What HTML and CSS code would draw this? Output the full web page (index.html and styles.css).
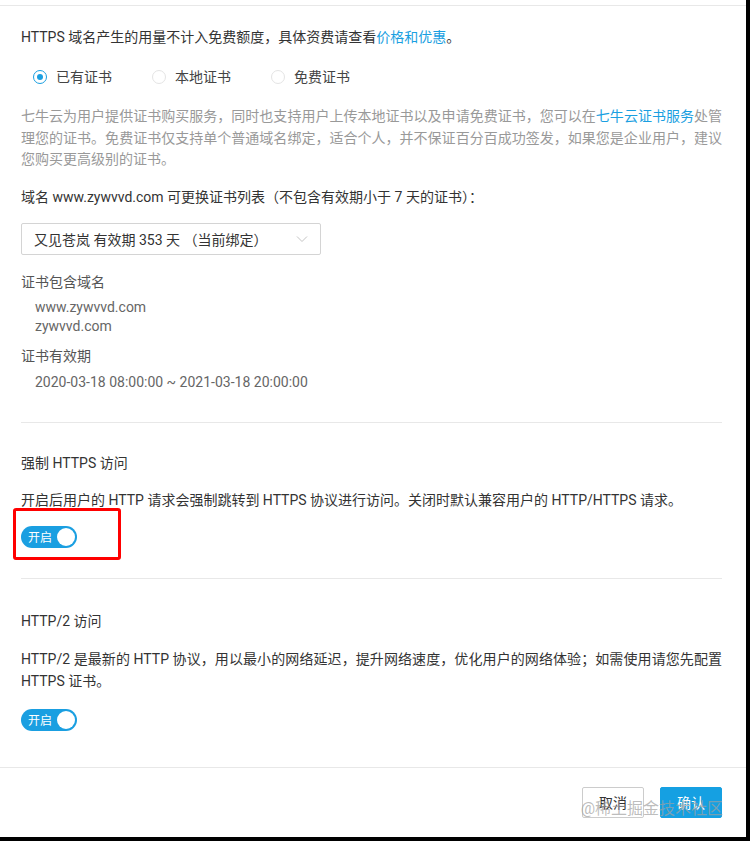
FILE: index.html
```html
<!DOCTYPE html>
<html lang="zh-CN">
<head>
    <meta charset="UTF-8">
    <meta name="viewport" content="width=device-width, initial-scale=1.0">
    <title>HTTPS 配置</title>
    <link rel="stylesheet" href="styles.css">
</head>
<body>
    <div class="modal">
        <div class="modal-top"></div>

        <div class="section section-cert">
            <p class="text">HTTPS 域名产生的用量不计入免费额度，具体资费请查看<a href="#" class="link">价格和优惠</a>。</p>

            <div class="radios">
                <label class="radio checked"><span class="dot"></span>已有证书</label>
                <label class="radio"><span class="dot"></span>本地证书</label>
                <label class="radio"><span class="dot"></span>免费证书</label>
            </div>

            <p class="hint">七牛云为用户提供证书购买服务，同时也支持用户上传本地证书以及申请免费证书，您可以在<a href="#" class="link">七牛云证书服务</a>处管理您的证书。免费证书仅支持单个普通域名绑定，适合个人，并不保证百分百成功签发，如果您是企业用户，建议您购买更高级别的证书。</p>

            <p class="text list-title">域名 www.zywvvd.com 可更换证书列表（不包含有效期小于 7 天的证书）：</p>

            <div class="select">
                <span>又见苍岚 有效期 353 天 （当前绑定）</span>
                <svg class="chevron" width="12" height="8" viewBox="0 0 12 8"><path d="M1 1.5 L6 6.5 L11 1.5" fill="none" stroke="#c4c4c4" stroke-width="1"/></svg>
            </div>

            <div class="field-label">证书包含域名</div>
            <div class="field-value">www.zywvvd.com<br>zywvvd.com</div>
            <div class="field-label second">证书有效期</div>
            <div class="field-value date">2020-03-18 08:00:00 ~ 2021-03-18 20:00:00</div>
        </div>

        <div class="section section-force">
            <h4 class="title">强制 HTTPS 访问</h4>
            <p class="text desc">开启后用户的 HTTP 请求会强制跳转到 HTTPS 协议进行访问。关闭时默认兼容用户的 HTTP/HTTPS 请求。</p>
            <div class="toggle-wrap">
                <div class="toggle"><span>开启</span><i class="knob"></i></div>
                <div class="mark"></div>
            </div>
        </div>

        <div class="section section-http2">
            <h4 class="title">HTTP/2 访问</h4>
            <p class="text desc">HTTP/2 是最新的 HTTP 协议，用以最小的网络延迟，提升网络速度，优化用户的网络体验；如需使用请您先配置 HTTPS 证书。</p>
            <div class="toggle-wrap">
                <div class="toggle"><span>开启</span><i class="knob"></i></div>
            </div>
        </div>

        <div class="footer">
            <button class="btn">取消</button>
            <button class="btn primary">确认</button>
            <span class="watermark">@稀土掘金技术社区</span>
        </div>
    </div>
</body>
</html>
```

FILE: styles.css
```css
body {
    margin: 0;
    background: #000;
    font-family: "Roboto", "Noto Sans CJK SC", sans-serif;
    font-size: 14px;
    color: #333;
}
.modal {
    width: 746px;
    height: 837px;
    background: #fff;
    position: relative;
}
.modal-top {
    height: 5px;
    border-bottom: 1px solid #e8e8e8;
}
.section {
    margin: 0 24px 0 21px;
    border-bottom: 1px solid #e8e8e8;
}
.section-cert {
    padding: 20px 0 30px;
}
.section-force {
    padding: 29px 0 30px;
}
.section-http2 {
    padding: 31px 0 36px;
    border-bottom: none;
}
p {
    margin: 0;
}
.text {
    line-height: 22px;
}
.link {
    color: #1a9fe1;
    text-decoration: none;
}
.radios {
    display: flex;
    margin-top: 18px;
    padding-left: 12px;
    line-height: 22px;
}
.radio {
    display: flex;
    align-items: center;
    gap: 9px;
    margin-right: 40px;
    color: #444;
}
.dot {
    width: 14px;
    height: 14px;
    border: 1px solid #e4e4e4;
    border-radius: 50%;
    box-sizing: border-box;
    position: relative;
}
.radio.checked .dot {
    border-color: #1a9fe1;
}
.radio.checked .dot::after {
    content: "";
    position: absolute;
    left: 3px;
    top: 3px;
    width: 6px;
    height: 6px;
    border-radius: 50%;
    background: #1a9fe1;
}
.hint {
    margin-top: 18px;
    color: #999;
    line-height: 21.5px;
    text-align: justify;
}
.list-title {
    margin-top: 15px;
}
.select {
    margin-top: 15px;
    width: 300px;
    height: 32px;
    box-sizing: border-box;
    border: 1px solid #d4d4d4;
    border-radius: 2px;
    display: flex;
    align-items: center;
    justify-content: space-between;
    padding: 0 12px 0 12px;
    color: #333;
}
.field-label {
    margin-top: 16px;
    line-height: 22px;
    color: #555;
}
.field-label.second {
    margin-top: 9px;
}
.field-value {
    margin-top: 5px;
    padding-left: 14px;
    line-height: 19px;
    color: #666;
}
.field-value.date {
    margin-top: 6px;
}
.title {
    margin: 0;
    font-size: 14px;
    font-weight: normal;
    line-height: 22px;
    color: #333;
}
.desc {
    margin-top: 16px;
    text-align: justify;
}
.section-force .desc {
    margin-top: 15px;
}
.toggle-wrap {
    margin-top: 15px;
    position: relative;
    display: flex;
}
.section-http2 .toggle-wrap {
    margin-top: 17px;
}
.toggle {
    width: 56px;
    height: 22px;
    border-radius: 11px;
    background: #1a9fe1;
    display: flex;
    align-items: center;
    justify-content: space-between;
    padding: 0 2px 0 7px;
    box-sizing: border-box;
    color: #fff;
    font-size: 12px;
}
.knob {
    width: 18px;
    height: 18px;
    border-radius: 50%;
    background: #fff;
}
.mark {
    position: absolute;
    left: -8px;
    top: -18px;
    width: 108px;
    height: 52px;
    border: 3px solid #f00;
    border-radius: 3px;
    box-sizing: border-box;
}
.footer {
    border-top: 1px solid #e8e8e8;
    padding: 19px 24px 0 0;
    display: flex;
    justify-content: flex-end;
    gap: 16px;
    position: relative;
}
.btn {
    width: 62px;
    height: 31px;
    border: 1px solid #ccc;
    border-radius: 2px;
    background: #fff;
    color: #333;
    font-family: inherit;
    font-size: 14px;
    padding: 0;
}
.btn.primary {
    background: #15a0e2;
    border-color: #15a0e2;
    color: #fff;
}
.watermark {
    position: absolute;
    z-index: 1;
    right: 23px;
    top: 27px;
    font-size: 16px;
    color: rgba(160, 160, 160, 0.7);
    pointer-events: none;
}
```
